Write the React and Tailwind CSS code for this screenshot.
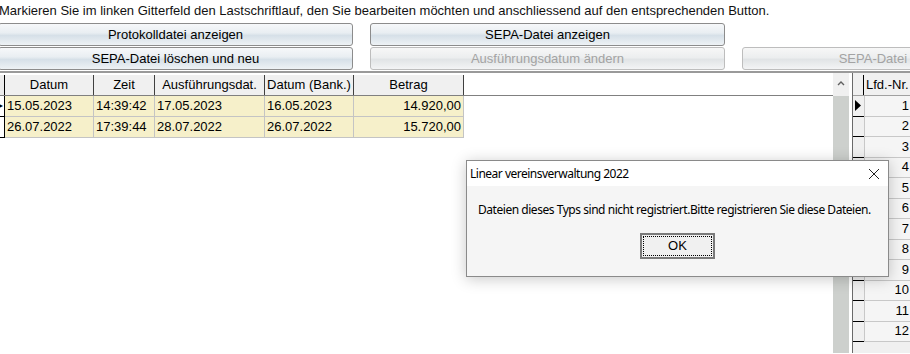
import React from 'react';

const rows = [
  { datum: '15.05.2023', zeit: '14:39:42', ausf: '17.05.2023', bank: '16.05.2023', betrag: '14.920,00' },
  { datum: '26.07.2022', zeit: '17:39:44', ausf: '28.07.2022', bank: '26.07.2022', betrag: '15.720,00' },
];

const cols = [
  { key: 'datum', label: 'Datum', w: 'w-[89px]' },
  { key: 'zeit', label: 'Zeit', w: 'w-[61px]' },
  { key: 'ausf', label: 'Ausführungsdat.', w: 'w-[110px]' },
  { key: 'bank', label: 'Datum (Bank.)', w: 'w-[89px]' },
  { key: 'betrag', label: 'Betrag', w: 'w-[110px]', right: true },
];

function WinButton({ children, disabled }) {
  return (
    <div
      className={`w-[355px] h-[23px] shrink-0 rounded-[3px] border flex items-center justify-center ${
        disabled
          ? 'border-[#bdbdbd] text-[#a3a3a3] bg-[linear-gradient(#f7f7f7_0%,#eceeef_45%,#e1e4e6_55%,#f3f4f5_100%)]'
          : 'border-[#8c8c8c] text-black bg-[linear-gradient(#f6f8fa_0%,#e9eef2_42%,#d6e0e8_55%,#eef2f5_100%)]'
      }`}
    >
      <span className="whitespace-nowrap">{children}</span>
    </div>
  );
}

export default function App() {
  return (
    <div className="relative w-[910px] h-[354px] overflow-hidden bg-white text-[13px] leading-[16px] font-['Liberation_Sans',Arial,sans-serif]">
      {/* instruction */}
      <div className="h-[23px] pt-[3px] -ml-[1px] whitespace-nowrap text-[#111]">
        Markieren Sie im linken Gitterfeld den Lastschriftlauf, den Sie bearbeiten möchten und anschliessend auf den entsprechenden Button.
      </div>

      {/* buttons */}
      <div className="flex flex-col gap-[1px] -ml-[2px]">
        <div className="flex gap-[17px]">
          <WinButton>Protokolldatei anzeigen</WinButton>
          <WinButton>SEPA-Datei anzeigen</WinButton>
        </div>
        <div className="flex gap-[17px]">
          <WinButton>SEPA-Datei löschen und neu</WinButton>
          <WinButton disabled>Ausführungsdatum ändern</WinButton>
          <WinButton disabled>SEPA-Datei erneut erstellen</WinButton>
        </div>
      </div>

      {/* grid panel */}
      <div className="mt-[1px] border-t-2 border-[#9a9a9a] flex h-[282px]">
        {/* left grid */}
        <div className="w-[833px] shrink-0 pt-[2px]">
          <div className="flex h-[21px] border-b border-[#808080]">
            <div className="w-[5px] border-r border-black bg-[#ececec]" />
            {cols.map((c) => (
              <div key={c.key} className={`${c.w} border-r border-[#404040] bg-[#f0f0f0] flex items-center justify-center`}>
                {c.label}
              </div>
            ))}
          </div>
          {rows.map((r, i) => (
            <div key={i} className="flex h-[21px]">
              <div className="w-[5px] border-r border-black border-b relative flex items-center">
                {i === 0 && <span className="text-[8px] leading-none -ml-[1px]">▸</span>}
              </div>
              {cols.map((c) => (
                <div
                  key={c.key}
                  className={`${c.w} border-r border-b border-[#c4c4c4] bg-[#f6f0ca] flex items-center px-[2px] ${c.right ? 'justify-end' : ''}`}
                >
                  {r[c.key]}
                </div>
              ))}
            </div>
          ))}
        </div>

        {/* scrollbar */}
        <div className="w-[16px] shrink-0 flex flex-col bg-[#f0f0f0]">
          <div className="h-[23px] flex items-center justify-center pb-[4px]">
            <svg width="8" height="6" viewBox="0 0 8 6">
              <path d="M1 5 L4 2 L7 5" fill="none" stroke="#606060" strokeWidth="1.4" />
            </svg>
          </div>
          <div className="flex-1 bg-[#cdd0cd]" />
        </div>
        <div className="w-[3px] shrink-0 bg-white" />

        {/* right grid */}
        <div className="flex-1 border-l border-[#6a6a6a] pt-[2px] bg-[#f0f0f0]">
          <div className="flex h-[21px] border-b border-[#a0a0a0]">
            <div className="w-[11px] shrink-0 border-r border-black" />
            <div className="flex-1 flex items-center pl-[2px] whitespace-nowrap">Lfd.-Nr.</div>
          </div>
          {Array.from({ length: 12 }, (_, i) => (
            <div key={i} className="flex h-[20.5px]">
              <div className="w-[11px] shrink-0 border-b border-black flex items-center pl-[2px]">
                {i === 0 && (
                  <svg width="6" height="11" viewBox="0 0 6 11">
                    <path d="M0 0 L6 5.5 L0 11 Z" fill="#000" />
                  </svg>
                )}
              </div>
              <div className="flex-1 bg-[#f5f5f5] border-l border-b border-[#c8c8c8] flex items-center justify-end pr-[1px]">
                {i + 1}
              </div>
            </div>
          ))}
        </div>
      </div>

      {/* dialog */}
      <div className="absolute left-[466px] top-[160px] w-[423px] h-[117px] border border-[#8a8a8a] bg-[#f5f5f5] shadow-[0_2px_14px_rgba(0,0,0,0.22)] flex flex-col font-['Noto_Sans',sans-serif] text-[12px]">
        <div className="h-[25px] bg-white flex items-center justify-between pl-[3px] pr-[8px]">
          <span className="tracking-[-0.5px]">Linear vereinsverwaltung 2022</span>
          <svg width="12" height="12" viewBox="0 0 12 12">
            <path d="M1 1 L11 11 M11 1 L1 11" stroke="#222" strokeWidth="1" />
          </svg>
        </div>
        <div className="flex-1 flex flex-col items-center pt-[16px]">
          <div className="w-full pl-[11px] whitespace-nowrap tracking-[-0.46px]">
            Dateien dieses Typs sind nicht registriert.Bitte registrieren Sie diese Dateien.
          </div>
          <div className="mt-[15px] w-[75px] h-[26px] border-2 border-[#7a7a7a] bg-[#f0f0f0] p-[1px]">
            <div className="w-full h-full border border-dotted border-black flex items-center justify-center font-['Liberation_Sans',sans-serif] text-[13px]">
              OK
            </div>
          </div>
        </div>
      </div>
    </div>
  );
}
